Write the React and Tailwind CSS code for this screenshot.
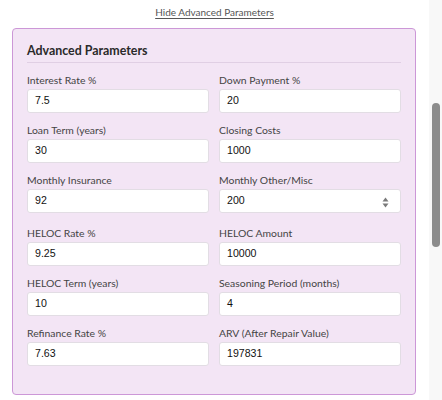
import React from "react";

const rows = [
  [["Interest Rate %", "7.5"], ["Down Payment %", "20"]],
  [["Loan Term (years)", "30"], ["Closing Costs", "1000"]],
  [["Monthly Insurance", "92"], ["Monthly Other/Misc", "200", true]],
  [["HELOC Rate %", "9.25"], ["HELOC Amount", "10000"]],
  [["HELOC Term (years)", "10"], ["Seasoning Period (months)", "4"]],
  [["Refinance Rate %", "7.63"], ["ARV (After Repair Value)", "197831"]],
];

function Field({ label, value, spin }) {
  return (
    <div className="flex flex-col">
      <div className="h-[14px] leading-[14px] text-[10.4px] text-[#444] mb-[2px] font-['Lato',sans-serif] whitespace-nowrap">
        {label}
      </div>
      <div className="relative h-[24px] bg-white border border-[#e2dde4] rounded-[3px] flex items-center pl-[7px] font-['Liberation_Sans',Arial,sans-serif] text-[10.6px] text-[#111]">
        {value}
        {spin && (
          <svg className="absolute right-[11px] top-[7px]" width="7" height="11" viewBox="0 0 7 11">
            <path d="M3.5 0.5 L6.5 4.5 L0.5 4.5 Z" fill="#7a7a7a" />
            <path d="M3.5 10.5 L6.5 6.5 L0.5 6.5 Z" fill="#7a7a7a" />
          </svg>
        )}
      </div>
    </div>
  );
}

export default function App() {
  return (
    <div className="flex w-[442px] h-[400px] overflow-hidden bg-white">
      <div className="w-[429px] flex flex-col pt-[4px]">
        <div className="h-[16px] flex justify-center mb-[8px]">
          <span className="text-[10px] leading-[16px] text-[#555] underline underline-offset-2 font-['Lato',sans-serif]">
            Hide Advanced Parameters
          </span>
        </div>
        <div className="ml-[12px] w-[404px] bg-[#f3e5f5] border border-[#cc97d7] rounded-[4px] px-[14px] pt-[13px] pb-[28px] box-border">
          <div className="text-[12.4px] leading-[18px] font-bold text-[#2a2a2a] font-['Lato',sans-serif] pb-[2px] border-b border-[#e0cfe4] mb-[10px]">
            Advanced Parameters
          </div>
          <div className="flex flex-col">
            {rows.map((r, i) => (
              <div
                key={i}
                className={
                  "grid grid-cols-2 gap-x-[10px] " +
                  (i === 3 ? "mt-[13px]" : i > 0 ? "mt-[10px]" : "")
                }
              >
                {r.map(([l, v, s]) => (
                  <Field key={l} label={l} value={v} spin={s} />
                ))}
              </div>
            ))}
          </div>
        </div>
      </div>
      <div className="w-[13px] h-full bg-[#f8f8f8] flex flex-col pl-[3px] pt-[103px]">
        <div className="w-[8px] h-[144px] rounded-full bg-[#8c8c8c]" />
      </div>
    </div>
  );
}
